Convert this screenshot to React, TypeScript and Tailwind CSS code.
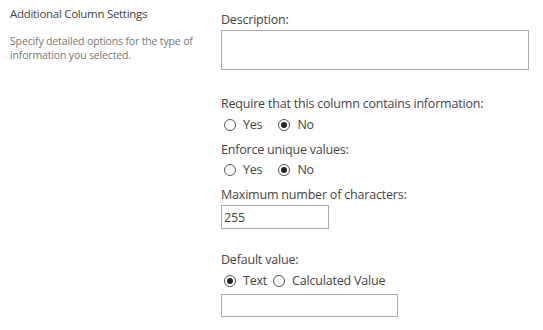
import { useState } from "react";

function Radio({ checked, label, onClick }: { checked: boolean; label: string; onClick: () => void }) {
  return (
    <label className="flex items-center cursor-pointer" onClick={onClick}>
      <span className="flex h-[12px] w-[12px] items-center justify-center rounded-full border border-[#555] bg-white">
        {checked && <span className="h-[6px] w-[6px] rounded-full bg-[#222]" />}
      </span>
      <span className="ml-[7px]">{label}</span>
    </label>
  );
}

export default function App() {
  const [required, setRequired] = useState(false);
  const [unique, setUnique] = useState(false);
  const [defaultType, setDefaultType] = useState<"text" | "calc">("text");

  return (
    <div
      className="flex h-[330px] w-[543px] bg-white text-[#444]"
      style={{ fontFamily: '"Open Sans", "Noto Sans", sans-serif' }}
    >
      {/* Section description */}
      <div className="w-[221px] shrink-0 pl-[10px] pr-[12px] pt-[5px]">
        <div className="text-[11.5px] leading-[18px] tracking-[-0.3px] text-[#444]">Additional Column Settings</div>
        <p className="mt-[11px] text-[10.5px] leading-[14px] tracking-[-0.15px] text-[#777]">
          Specify detailed options for the type of information you selected.
        </p>
      </div>

      {/* Fields */}
      <div className="flex flex-col text-[12.5px] leading-[18px] tracking-[-0.2px]">
        <div className="mt-[11px]">Description:</div>
        <textarea className="mt-[1px] h-[40px] w-[308px] resize-none border border-[#ababab] bg-white outline-none" />

        <div className="mt-[25px]">Require that this column contains information:</div>
        <div className="mt-[4px] flex h-[16px] items-center pl-[3px]">
          <Radio checked={required} label="Yes" onClick={() => setRequired(true)} />
          <div className="w-[16px]" />
          <Radio checked={!required} label="No" onClick={() => setRequired(false)} />
        </div>

        <div className="mt-[8px]">Enforce unique values:</div>
        <div className="mt-[3px] flex h-[16px] items-center pl-[3px]">
          <Radio checked={unique} label="Yes" onClick={() => setUnique(true)} />
          <div className="w-[16px]" />
          <Radio checked={!unique} label="No" onClick={() => setUnique(false)} />
        </div>

        <div className="mt-[8px]">Maximum number of characters:</div>
        <input
          defaultValue="255"
          className="mt-[1px] h-[24px] w-[108px] border border-[#ababab] px-[2px] text-[12.5px] text-[#444] outline-none"
        />

        <div className="mt-[22px]">Default value:</div>
        <div className="mt-[4px] flex h-[16px] items-center pl-[3px]">
          <Radio checked={defaultType === "text"} label="Text" onClick={() => setDefaultType("text")} />
          <div className="w-[6px]" />
          <Radio checked={defaultType === "calc"} label="Calculated Value" onClick={() => setDefaultType("calc")} />
        </div>
        <input className="mt-[5px] h-[23px] w-[177px] border border-[#ababab] px-[2px] outline-none" />
      </div>
    </div>
  );
}
